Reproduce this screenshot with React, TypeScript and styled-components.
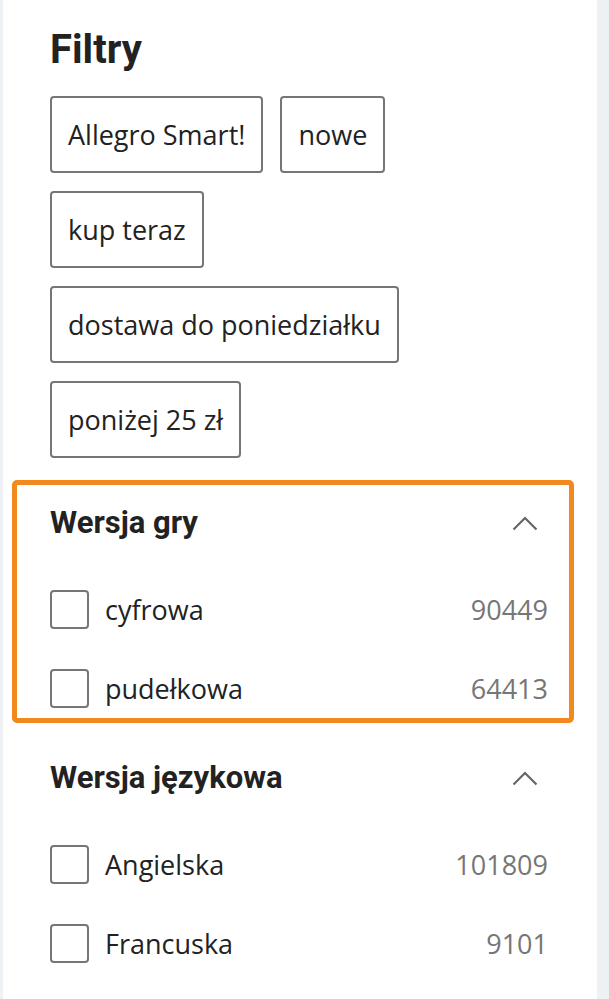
import React from "react";
import styled, { createGlobalStyle } from "styled-components";

const Global = createGlobalStyle`
  html, body { margin: 0; padding: 0; background: #eef1f4; }
  body { font-family: "Open Sans", "Liberation Sans", sans-serif; color: #222; }
  * { box-sizing: border-box; }
`;

const Page = styled.div`
  display: flex;
  min-height: 999px;
  padding-left: 3px;
`;

const Panel = styled.aside`
  width: 594px;
  background: #fff;
  padding: 26px 23px 0 9px;
  display: flex;
  flex-direction: column;
`;

const Header = styled.div`
  padding-left: 38px;
  padding-bottom: 22px;
`;

const Title = styled.h1`
  margin: 0 0 22px;
  font-family: Roboto, "Liberation Sans", sans-serif;
  font-weight: 700;
  font-size: 40px;
  line-height: 48px;
  color: #222;
`;

const Chips = styled.div`
  display: flex;
  flex-wrap: wrap;
  gap: 18px 17px;
  max-width: 470px;
`;

const Chip = styled.button`
  height: 77px;
  padding: 0 16px;
  border: 2px solid #767676;
  border-radius: 4px;
  background: #fff;
  font-family: "Open Sans", "Liberation Sans", sans-serif;
  font-size: 27px;
  color: #222;
  display: flex;
  align-items: center;
  white-space: nowrap;
`;

const Sections = styled.div`
  display: flex;
  flex-direction: column;
  gap: 12px;
`;

const Section = styled.section<{ $active?: boolean }>`
  border: 5px solid ${(p) => (p.$active ? "#f1891f" : "transparent")};
  border-radius: 5px;
  padding: 20px 21px 10px 33px;
`;

const SectionHead = styled.div`
  display: flex;
  align-items: center;
  justify-content: space-between;
  height: 36px;
`;

const SectionTitle = styled.h2`
  margin: 0;
  font-family: Roboto, "Liberation Sans", sans-serif;
  font-weight: 700;
  font-size: 31px;
  line-height: 36px;
  color: #222;
`;

const Chevron = styled.svg`
  width: 26px;
  height: 15px;
  margin-right: 10px;
`;

const List = styled.ul`
  list-style: none;
  margin: 49px 0 0;
  padding: 0;
  display: flex;
  flex-direction: column;
  gap: 40px;
`;

const Row = styled.li`
  display: flex;
  align-items: center;
  height: 39px;
`;

const Box = styled.span`
  width: 39px;
  height: 39px;
  border: 2px solid #767676;
  border-radius: 4px;
  flex: none;
`;

const Label = styled.span`
  margin-left: 16px;
  font-size: 27px;
  color: #222;
  flex: 1;
`;

const Count = styled.span`
  font-size: 27px;
  color: #767676;
`;

const chips = ["Allegro Smart!", "nowe", "kup teraz", "dostawa do poniedziałku", "poniżej 25 zł"];

const sections = [
  { title: "Wersja gry", active: true, items: [["cyfrowa", "90449"], ["pudełkowa", "64413"]] },
  { title: "Wersja językowa", active: false, items: [["Angielska", "101809"], ["Francuska", "9101"]] },
];

export default function App() {
  return (
    <>
      <Global />
      <Page>
        <Panel>
          <Header>
            <Title>Filtry</Title>
            <Chips>
              {chips.map((c) => (
                <Chip key={c}>{c}</Chip>
              ))}
            </Chips>
          </Header>
          <Sections>
            {sections.map((s) => (
              <Section key={s.title} $active={s.active}>
                <SectionHead>
                  <SectionTitle>{s.title}</SectionTitle>
                  <Chevron viewBox="0 0 26 15" fill="none">
                    <path d="M1.5 13.5 L13 2 L24.5 13.5" stroke="#666" strokeWidth="2.2" />
                  </Chevron>
                </SectionHead>
                <List>
                  {s.items.map(([l, n]) => (
                    <Row key={l}>
                      <Box />
                      <Label>{l}</Label>
                      <Count>{n}</Count>
                    </Row>
                  ))}
                </List>
              </Section>
            ))}
          </Sections>
        </Panel>
      </Page>
    </>
  );
}
